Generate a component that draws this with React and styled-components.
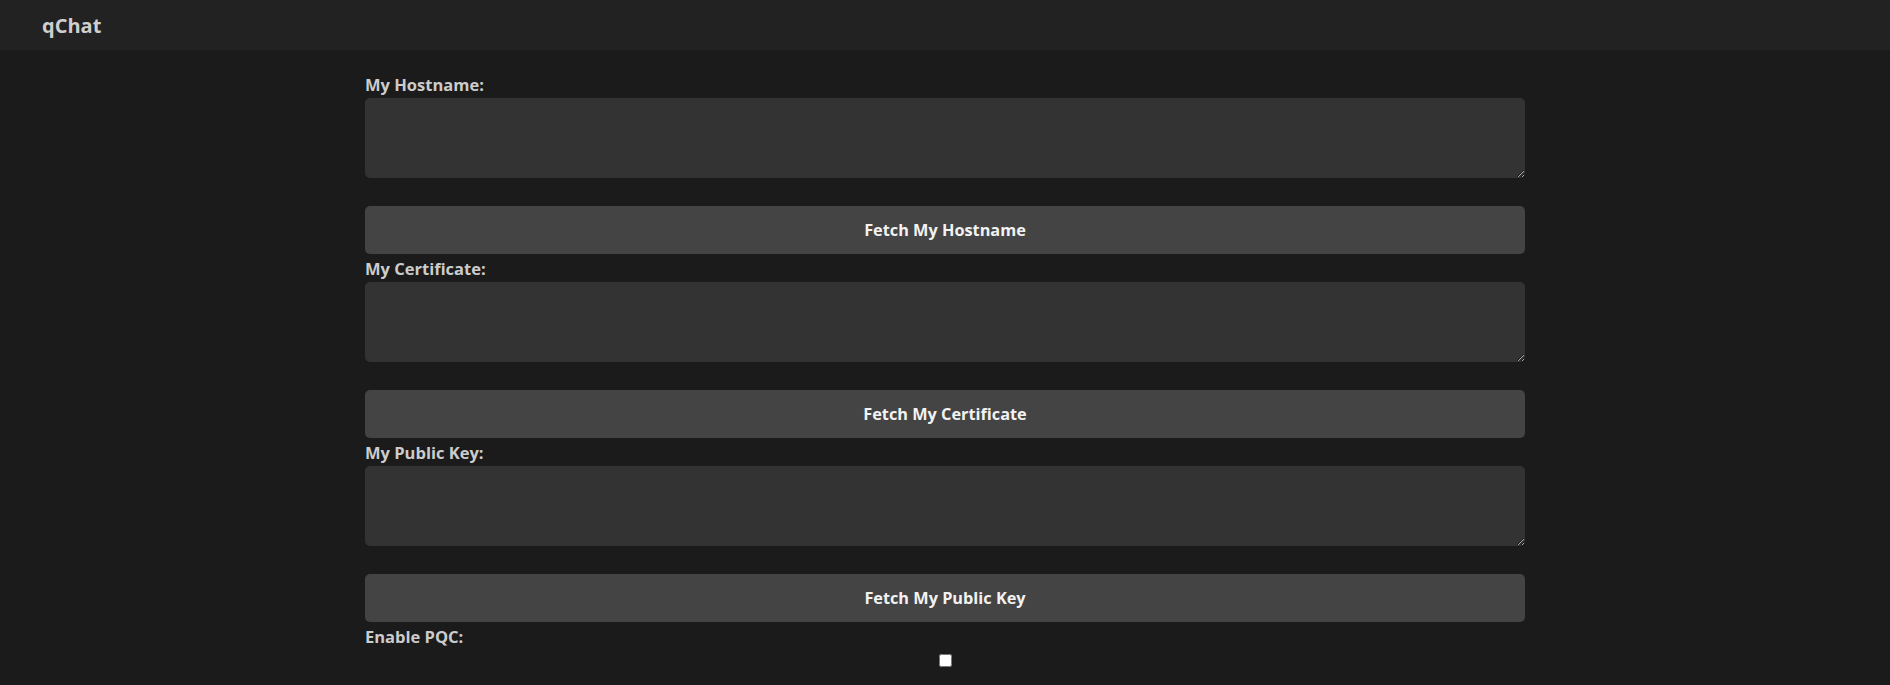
import React from "react";
import styled, { createGlobalStyle } from "styled-components";

const GlobalStyle = createGlobalStyle`
  html, body {
    margin: 0;
    padding: 0;
    background-color: #1b1b1b;
    font-family: "Open Sans", "Noto Sans", sans-serif;
    color: #cccccc;
  }
`;

const Header = styled.header`
  height: 50px;
  background-color: #222222;
  display: flex;
  align-items: center;
  padding: 0 42px;
`;

const Brand = styled.div`
  font-size: 20px;
  font-weight: 700;
  color: #cfcfcf;
`;

const Main = styled.main`
  width: 1160px;
  margin: 0 auto;
  padding-top: 20px;
`;

const Label = styled.label`
  display: block;
  font-size: 16.5px;
  line-height: 23px;
  font-weight: 700;
  color: #cccccc;
  padding-top: 3px;
  margin-bottom: 2px;
`;

const TextArea = styled.textarea`
  display: block;
  box-sizing: border-box;
  width: 100%;
  height: 80px;
  margin: 0 0 28px;
  padding: 10px;
  border: none;
  border-radius: 5px;
  background-color: #333333;
  color: #eeeeee;
  font-family: inherit;
  font-size: 14px;
  outline: none;
`;

const Button = styled.button`
  display: block;
  width: 100%;
  height: 48px;
  border: none;
  border-radius: 5px;
  background-color: #444444;
  color: #f2f2f2;
  font-family: inherit;
  font-size: 16.3px;
  font-weight: 700;
  cursor: pointer;
`;

const CheckRow = styled.div`
  text-align: center;
`;

const sections = [
  { label: "My Hostname:", button: "Fetch My Hostname" },
  { label: "My Certificate:", button: "Fetch My Certificate" },
  { label: "My Public Key:", button: "Fetch My Public Key" },
];

export default function App() {
  return (
    <>
      <GlobalStyle />
      <Header>
        <Brand>qChat</Brand>
      </Header>
      <Main>
        {sections.map((s) => (
          <div key={s.label}>
            <Label>{s.label}</Label>
            <TextArea />
            <Button type="button">{s.button}</Button>
          </div>
        ))}
        <Label>Enable PQC:</Label>
        <CheckRow>
          <input type="checkbox" />
        </CheckRow>
      </Main>
    </>
  );
}
